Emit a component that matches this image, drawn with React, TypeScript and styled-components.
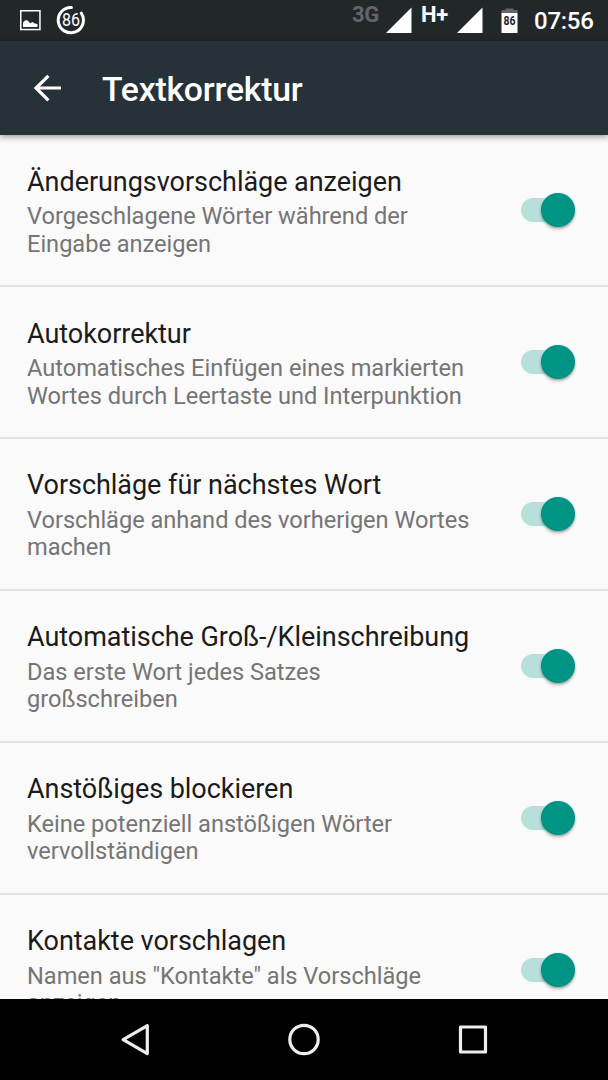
import React from "react";
import styled, { createGlobalStyle } from "styled-components";

const GlobalStyle = createGlobalStyle`
  *, *::before, *::after { box-sizing: border-box; }
  body {
    margin: 0;
    background: #000;
    font-family: Roboto, "Liberation Sans", sans-serif;
  }
`;

const Screen = styled.div`
  display: flex;
  flex-direction: column;
  width: 608px;
  height: 1080px;
  overflow: hidden;
  background: #fafafa;
`;

const StatusBar = styled.header`
  display: flex;
  flex: none;
  justify-content: space-between;
  height: 41px;
  padding: 0 14px 0 20px;
  background: #22272a;
  color: #fff;
`;

const StatusGroup = styled.div`
  display: flex;
`;

const StatusIcon = styled.svg<{ $gap?: number }>`
  display: block;
  flex: none;
  height: 41px;
  margin-left: ${(p) => p.$gap ?? 0}px;
`;

const NetworkLabel = styled.span<{ $dim?: boolean; $width: number; $gap?: number }>`
  width: ${(p) => p.$width}px;
  margin-left: ${(p) => p.$gap ?? 0}px;
  font-size: 22px;
  font-weight: 700;
  letter-spacing: -0.3px;
  line-height: 30px;
  white-space: nowrap;
  color: ${(p) => (p.$dim ? "#626668" : "#fff")};
`;

const Clock = styled.span`
  width: 60px;
  margin-left: 16px;
  font-size: 24px;
  font-weight: 500;
  letter-spacing: -0.25px;
  line-height: 42px;
  white-space: nowrap;
`;

const Toolbar = styled.div`
  position: relative;
  z-index: 1;
  display: flex;
  flex: none;
  align-items: center;
  height: 94px;
  padding-left: 32px;
  background: #273238;
  box-shadow: 0 2px 6px rgba(0, 0, 0, 0.38);
`;

const BackButton = styled.button`
  display: block;
  width: 30px;
  height: 30px;
  padding: 0;
  border: 0;
  background: none;
`;

const ToolbarTitle = styled.h1`
  margin: 3px 0 0 40px;
  font-size: 33.78px;
  font-weight: 500;
  letter-spacing: -0.22px;
  line-height: 40px;
  color: #fff;
`;

const List = styled.main`
  flex: 1;
  min-height: 0;
  overflow: hidden;
`;

const Row = styled.section`
  display: flex;
  align-items: center;
  justify-content: space-between;
  height: 151.95px;
  padding: 0 33px 0 27px;
  border-bottom: 2px solid #e0e0e0;
`;

const RowText = styled.div`
  width: 460px;
  padding-top: 4px;
`;

const RowTitle = styled.h2`
  margin: 0;
  font-size: 27px;
  font-weight: 400;
  letter-spacing: -0.04px;
  line-height: 32px;
  white-space: nowrap;
  color: #1b1b1b;
`;

const RowSummary = styled.p`
  margin: 5.3px 0 0;
  font-size: 23.64px;
  letter-spacing: -0.03px;
  line-height: 27.7px;
  white-space: pre-line;
  color: #757575;
`;

const Track = styled.div`
  display: flex;
  flex: none;
  align-items: center;
  justify-content: flex-end;
  width: 54px;
  height: 24px;
  border-radius: 12px;
  background: linear-gradient(to right, #b7e0dc 40px, transparent 40px);
`;

const Thumb = styled.div`
  width: 34px;
  height: 34px;
  flex: none;
  border-radius: 50%;
  background: #009485;
  box-shadow: 0 2px 3px rgba(0, 0, 0, 0.32), 0 0 2px rgba(0, 0, 0, 0.15);
`;

const NavBar = styled.nav`
  display: flex;
  flex: none;
  justify-content: center;
  gap: 105px;
  height: 81px;
  background: #000;
`;

const NavIcon = styled.svg`
  display: block;
  width: 64px;
  height: 81px;
  fill: none;
  stroke: #eee;
  stroke-width: 3.2;
  stroke-linejoin: round;
`;

const settings = [
  { title: "Änderungsvorschläge anzeigen", summary: "Vorgeschlagene Wörter während der\nEingabe anzeigen" },
  { title: "Autokorrektur", summary: "Automatisches Einfügen eines markierten\nWortes durch Leertaste und Interpunktion" },
  { title: "Vorschläge für nächstes Wort", summary: "Vorschläge anhand des vorherigen Wortes\nmachen" },
  { title: "Automatische Groß-/Kleinschreibung", summary: "Das erste Wort jedes Satzes\ngroßschreiben" },
  { title: "Anstößiges blockieren", summary: "Keine potenziell anstößigen Wörter\nvervollständigen" },
  { title: "Kontakte vorschlagen", summary: "Namen aus \"Kontakte\" als Vorschläge\nanzeigen" },
];

const Signal = ({ gap }: { gap: number }) => (
  <StatusIcon $gap={gap} width="26" viewBox="0 0 26 41">
    <path d="M0 33 L25.5 7.5 V33 Z" fill="#fff" />
  </StatusIcon>
);

export default function App() {
  return (
    <Screen>
      <GlobalStyle />
      <StatusBar>
        <StatusGroup>
          <StatusIcon width="21" viewBox="0 0 21 41">
            <rect x="0.75" y="10.75" width="19.2" height="18.8" fill="none" stroke="#fff" strokeWidth="1.5" />
            <path d="M3 27 V22.5 Q5 19.5 7.2 20.3 L10.3 23.2 L12.5 22 L14.8 23.4 L17.5 24 V27 Z" fill="#fff" />
          </StatusIcon>
          <StatusIcon $gap={15} width="30" viewBox="0 0 30 41">
            <path d="M15.4 7.6 A12.6 12.6 0 1 0 25.3 13.2" fill="none" stroke="#fff" strokeWidth="3" strokeLinecap="round" />
            <text x="15" y="26.4" fill="#fff" fontSize="18.5" textAnchor="middle" textLength="18" lengthAdjust="spacingAndGlyphs">86</text>
          </StatusIcon>
        </StatusGroup>
        <StatusGroup>
          <NetworkLabel $dim $width={28}>3G</NetworkLabel>
          <Signal gap={6} />
          <NetworkLabel $width={28} $gap={9}>H+</NetworkLabel>
          <Signal gap={8} />
          <StatusIcon $gap={18} width="17" viewBox="0 0 17 41">
            <path d="M4.5 8.5 H12.5 V10 H16.5 V13.5 H0.5 V10 H4.5 Z" fill="#626668" />
            <rect x="0.5" y="13" width="16" height="20" fill="#fff" />
            <text x="8.5" y="25" fill="#22272a" fontSize="12.5" fontWeight="700" textAnchor="middle" textLength="12" lengthAdjust="spacingAndGlyphs">86</text>
          </StatusIcon>
          <Clock>07:56</Clock>
        </StatusGroup>
      </StatusBar>
      <Toolbar>
        <BackButton aria-label="Zurück">
          <svg width="30" height="30" viewBox="0 0 30 30" fill="none" stroke="#fff" strokeWidth="3.2">
            <path d="M29 15 H4 M16.4 2.8 L4 15 L16.4 27.4" />
          </svg>
        </BackButton>
        <ToolbarTitle>Textkorrektur</ToolbarTitle>
      </Toolbar>
      <List>
        {settings.map((s) => (
          <Row key={s.title}>
            <RowText>
              <RowTitle>{s.title}</RowTitle>
              <RowSummary>{s.summary}</RowSummary>
            </RowText>
            <Track role="switch" aria-checked="true">
              <Thumb />
            </Track>
          </Row>
        ))}
      </List>
      <NavBar>
        <NavIcon viewBox="0 0 64 81">
          <path d="M44.3 26.6 V54.6 L20.2 40.6 Z" />
        </NavIcon>
        <NavIcon viewBox="0 0 64 81">
          <circle cx="32" cy="40.5" r="14.2" />
        </NavIcon>
        <NavIcon viewBox="0 0 64 81">
          <rect x="19.5" y="28" width="25" height="25" />
        </NavIcon>
      </NavBar>
    </Screen>
  );
}
